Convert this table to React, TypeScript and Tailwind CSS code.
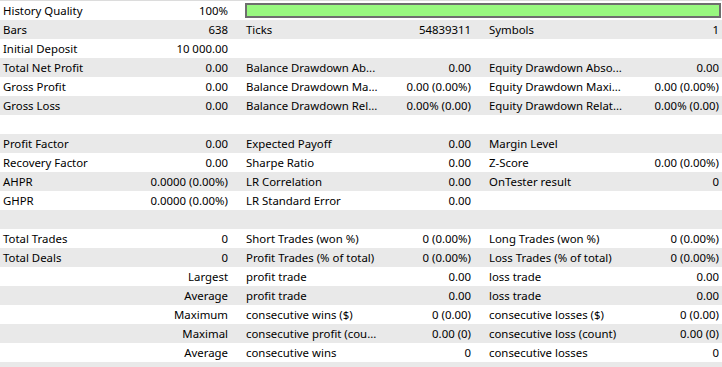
type Cell = [string, string] | null;

const rows: Cell[][] = [
  [["Bars", "638"], ["Ticks", "54839311"], ["Symbols", "1"]],
  [["Initial Deposit", "10 000.00"], null, null],
  [["Total Net Profit", "0.00"], ["Balance Drawdown Ab...", "0.00"], ["Equity Drawdown Abso...", "0.00"]],
  [["Gross Profit", "0.00"], ["Balance Drawdown Ma...", "0.00 (0.00%)"], ["Equity Drawdown Maxi...", "0.00 (0.00%)"]],
  [["Gross Loss", "0.00"], ["Balance Drawdown Rel...", "0.00% (0.00)"], ["Equity Drawdown Relat...", "0.00% (0.00)"]],
  [null, null, null],
  [["Profit Factor", "0.00"], ["Expected Payoff", "0.00"], ["Margin Level", ""]],
  [["Recovery Factor", "0.00"], ["Sharpe Ratio", "0.00"], ["Z-Score", "0.00 (0.00%)"]],
  [["AHPR", "0.0000 (0.00%)"], ["LR Correlation", "0.00"], ["OnTester result", "0"]],
  [["GHPR", "0.0000 (0.00%)"], ["LR Standard Error", "0.00"], null],
  [null, null, null],
  [["Total Trades", "0"], ["Short Trades (won %)", "0 (0.00%)"], ["Long Trades (won %)", "0 (0.00%)"]],
  [["Total Deals", "0"], ["Profit Trades (% of total)", "0 (0.00%)"], ["Loss Trades (% of total)", "0 (0.00%)"]],
  [["", "Largest"], ["profit trade", "0.00"], ["loss trade", "0.00"]],
  [["", "Average"], ["profit trade", "0.00"], ["loss trade", "0.00"]],
  [["", "Maximum"], ["consecutive wins ($)", "0 (0.00)"], ["consecutive losses ($)", "0 (0.00)"]],
  [["", "Maximal"], ["consecutive profit (cou...", "0.00 (0)"], ["consecutive loss (count)", "0.00 (0)"]],
  [["", "Average"], ["consecutive wins", "0"], ["consecutive losses", "0"]],
  [null, null, null],
];

const pads = ["pl-[3px] pr-[8px]", "pl-[10px] pr-[8px]", "pl-[10px] pr-[3px]"];

export default function App() {
  return (
    <div className="h-[367px] w-[722px] overflow-hidden border-t border-[#dcdcdc] bg-white font-['Noto_Sans',sans-serif] text-[11.4px] text-black">
      {/* history quality row */}
      <div className="grid h-[19px] grid-cols-[236px_486px] items-center">
        <div className={`flex justify-between leading-[19px] ${pads[0]}`}>
          <span>History Quality</span>
          <span>100%</span>
        </div>
        <div className="pl-[9px] pr-[1px]">
          <div className="h-[15px] border-2 border-[#6e6e6e] bg-[#98f87f]" />
        </div>
      </div>
      {rows.map((row, i) => (
        <div
          key={i}
          className={`grid h-[19px] grid-cols-[236px_243px_243px] items-center ${i % 2 === 0 ? "bg-[#e9e9e9]" : "bg-white"}`}
        >
          {row.map((cell, j) => (
            <div key={j} className={`flex justify-between whitespace-nowrap leading-[19px] ${pads[j]}`}>
              <span>{cell ? cell[0] : ""}</span>
              <span>{cell ? cell[1] : ""}</span>
            </div>
          ))}
        </div>
      ))}
    </div>
  );
}
